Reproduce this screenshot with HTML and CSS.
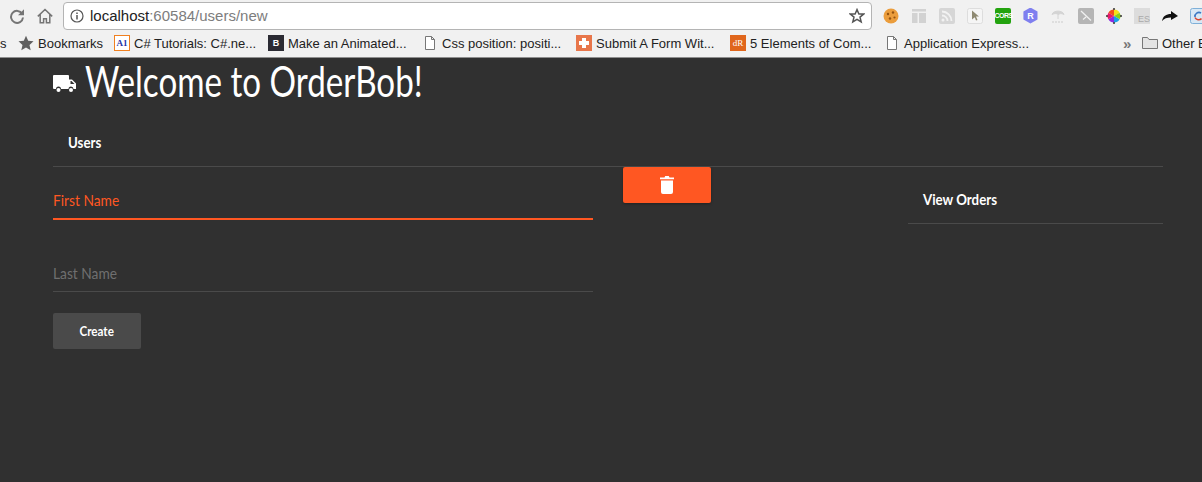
FILE: index.html
```html
<!DOCTYPE html>
<html lang="en">
<head>
<meta charset="utf-8">
<title>OrderBob</title>
<link rel="stylesheet" href="styles.css">
</head>
<body>
<header class="chrome">
  <div class="toolbar">
    <svg class="nav reload" viewBox="0 0 16 16"><path d="M13.200 5.800A6 6 0 1 0 14 9.500" fill="none" stroke="#757575" stroke-width="2"/><path d="M15 1.200v6H9z" fill="#757575"/></svg>
    <svg class="nav home" viewBox="0 0 16 16"><path d="M.8 8.400 8 1.500l7.200 6.900M3.200 6.400V14.800h3.400v-4h2.800v4h3.400V6.400" fill="none" stroke="#757575" stroke-width="1.500"/></svg>
    <div class="omnibox">
      <svg class="info" viewBox="0 0 14 14"><circle cx="7" cy="7" r="6" fill="none" stroke="#555" stroke-width="1.200"/><path d="M7 6v4.500M7 3.400v1.500" stroke="#555" stroke-width="1.500"/></svg>
      <span class="url">localhost<span class="url-dim">:60584/users/new</span></span>
      <svg class="star" viewBox="0 0 16 16"><path d="M8 1.600 9.900 6h4.800l-3.700 3.100 1.200 4.900L8 11.400 3.800 14 5 9.100 1.300 6h4.800z" fill="none" stroke="#555" stroke-width="1.500"/></svg>
    </div>
    <div class="extensions">
      <svg class="ext" viewBox="0 0 16 16"><circle cx="8" cy="8" r="7.500" fill="#eb9d3c"/><g fill="#95520f"><circle cx="5" cy="6" r="1.200"/><circle cx="10" cy="4.500" r="1.200"/><circle cx="7" cy="10.500" r="1.200"/><circle cx="11.500" cy="9.500" r="1.100"/></g></svg>
      <svg class="ext" viewBox="0 0 16 16"><path d="M1 1h14v2.500H1zM1 5h5.500v10H1zM8 5h7v10H8z" fill="#d2d2d2"/></svg>
      <svg class="ext" viewBox="0 0 16 16"><rect width="16" height="16" rx="2" fill="#d6d6d6"/><g fill="none" stroke="#f2f2f2" stroke-width="1.800"><path d="M3 7.500a5.500 5.500 0 0 1 5.500 5.500M3 3.500A9.500 9.500 0 0 1 12.500 13"/></g><circle cx="4" cy="12" r="1.500" fill="#f2f2f2"/></svg>
      <svg class="ext" viewBox="0 0 16 16"><rect x=".5" y=".5" width="15" height="15" rx="2" fill="#f5f5f5" stroke="#ddd"/><path d="M5 2.500 12 8.500H9l1.500 3.500-1.500.6L7.800 9.200 5 11.500z" fill="#8f8a72"/></svg>
      <span class="ext cors">CORS</span>
      <span class="ext rbadge">R</span>
      <svg class="ext" viewBox="0 0 16 16"><path d="M2 6.500C3 2 13 2 14 6.500 11 5 10 5.500 8.500 6.500 7 5.500 5 5 2 6.500ZM8 6v5" fill="#d4d4d4" stroke="#d4d4d4"/><path d="M2 14h12" stroke="#dedede" stroke-width="2" stroke-dasharray="2 1"/></svg>
      <svg class="ext" viewBox="0 0 16 16"><rect width="16" height="16" rx="2" fill="#b5b5b5"/><path d="M3 3 13 12.500M5 11.500 8 9" stroke="#f0f0f0" stroke-width="1.300"/></svg>
      <svg class="ext" viewBox="0 0 16 16"><path d="M8 8V1.500a6.500 6.500 0 0 1 5.600 3.200z" fill="#f7e017"/><path d="M8 8l5.600-3.300a6.500 6.500 0 0 1 0 6.600z" fill="#8bd117"/><path d="M8 8l5.600 3.300A6.500 6.500 0 0 1 8 14.500z" fill="#18a0e8"/><path d="M8 8v6.500a6.500 6.500 0 0 1-5.600-3.200z" fill="#8a2be2"/><path d="M8 8 2.400 11.300a6.500 6.500 0 0 1 0-6.600z" fill="#e8186a"/><path d="M8 8 2.400 4.700A6.500 6.500 0 0 1 8 1.500z" fill="#f2501a"/><path d="M8 0v2M8 14v2M0 8h2M14 8h2" stroke="#333" stroke-width="1.500"/></svg>
      <div class="ext es">ES</div>
      <svg class="ext" viewBox="0 0 16 16"><path d="M0 13C1 8 4 6 9 6V3l7 5-7 4V9.500C5 9.500 2 10.500 0 13Z" fill="#111"/></svg>
      <svg class="ext" viewBox="0 0 16 16"><rect x=".5" y=".5" width="15" height="15" rx="2" fill="#d8e8f5" stroke="#7fb0d8"/><path d="M11 5a4 4 0 0 0-6 4" fill="none" stroke="#3b78c4" stroke-width="1.600"/><path d="M5 9.500a4 4 0 0 0 6.500 1" fill="none" stroke="#d9432f" stroke-width="1.600"/></svg>
    </div>
  </div>
  <nav class="bookmarks">
    <span class="bm bm-cut">s</span>
    <span class="bm bm-first"><svg class="fav" viewBox="0 0 16 16"><path d="M8 .8 10.200 5.800l5.300.5-4 3.600 1.200 5.300L8 12.400l-4.700 2.800 1.200-5.300-4-3.600 5.300-.5z" fill="#5f5f5f"/></svg>Bookmarks</span>
    <span class="bm"><span class="fav fav-a">A1</span>C# Tutorials: C#.ne...</span>
    <span class="bm"><span class="fav fav-b">B</span>Make an Animated...</span>
    <span class="bm"><svg class="fav" viewBox="0 0 16 16"><path d="M3.500 1.500h6l3 3v10h-9zM9.500 1.500v3h3" fill="#fff" stroke="#777"/></svg>Css position: positi...</span>
    <span class="bm"><svg class="fav" viewBox="0 0 16 16"><rect width="16" height="16" fill="#e8764a"/><path d="M6 3h4v3h3v4h-3v3H6v-3H3V6h3z" fill="#fff"/></svg>Submit A Form Wit...</span>
    <span class="bm"><span class="fav fav-d">dR</span>5 Elements of Com...</span>
    <span class="bm bm-app"><svg class="fav" viewBox="0 0 16 16"><path d="M3.500 1.500h6l3 3v10h-9zM9.500 1.500v3h3" fill="#fff" stroke="#777"/></svg>Application Express...</span>
    <span class="bm-more">»</span>
    <span class="bm bm-other"><svg class="fav" viewBox="0 0 16 16"><path d="M.5 13.500v-11h5l1.500 2h8.500v9z" fill="#e4e4e4" stroke="#777"/></svg>Other B</span>
  </nav>
</header>
<main class="app">
  <h1 class="title">
    <svg class="truck" viewBox="0 0 23 18"><path d="M1 0h14a1 1 0 0 1 1 1v3.500h3l4 4V14H20.500a2.500 2.500 0 0 0-5 0H8a2.500 2.500 0 0 0-5 0H1a1 1 0 0 1-1-1V1a1 1 0 0 1 1-1Z" fill="#fff"/><path d="M17.500 6v3h4l-3-3z" fill="#303030"/><circle cx="5.500" cy="15" r="2" fill="#fff"/><circle cx="18" cy="15" r="2" fill="#fff"/></svg>
    <span class="squeeze title-text">Welcome to OrderBob!</span>
  </h1>
  <div class="nav-item users"><span class="squeeze nav-text">Users</span></div>
  <div class="content">
    <form class="form">
      <div class="field field-active"><span class="squeeze field-text">First Name</span></div>
      <div class="field field-idle"><span class="squeeze field-text">Last Name</span></div>
      <button class="create" type="button"><span class="create-text">Create</span></button>
    </form>
    <button class="delete" type="button" aria-label="Delete">
      <svg class="trash" viewBox="0 0 14 18"><path d="M0 1.500h14V3.200H0zM4.500 1.500 5.200 0h3.600l.7 1.500zM1 4.500h12V16a2 2 0 0 1-2 2H3a2 2 0 0 1-2-2z" fill="#fff"/></svg>
    </button>
    <div class="nav-item orders"><span class="squeeze nav-text">View Orders</span></div>
  </div>
</main>
</body>
</html>
```
FILE: styles.css
```css
* { box-sizing: border-box; }
html, body { margin: 0; height: 100%; }
body { background: #303030; display: flex; flex-direction: column; overflow: hidden; }

.chrome { background: #f1f1f1; height: 58px; border-bottom: 1px solid #8e8e8e; font-family: "Liberation Sans", Arial, sans-serif; flex: none; overflow: hidden; }
.toolbar { height: 31px; display: flex; align-items: center; padding-left: 9px; }
.nav { width: 16px; height: 16px; flex: none; }
.home { margin-left: 12px; }
.omnibox { margin-left: 10px; width: 809px; height: 28px; background: #fff; border: 1px solid #b4b4b4; border-radius: 4px; display: flex; align-items: center; padding: 0 6px; flex: none; }
.info { width: 14px; height: 14px; margin-right: 6px; }
.url { font-size: 15px; color: #222; flex: 1; }
.url-dim { color: #7d7d7d; }
.star { width: 16px; height: 16px; }
.extensions { display: flex; align-items: center; gap: 11.900px; margin-left: 11px; }
.ext { width: 16px; height: 16px; flex: none; display: block; }
.es { background: #dcdcdc; color: #aaa; font-size: 9px; text-align: right; padding-top: 6px; line-height: 10px; }
.cors { background: #23a30f; color: #fff; border-radius: 2px; font-size: 7px; font-weight: 700; line-height: 16px; text-align: center; letter-spacing: -.5px; white-space: nowrap; }
.rbadge { background: #7f7fef; color: #fff; clip-path: polygon(50% 0, 94% 25%, 94% 75%, 50% 100%, 6% 75%, 6% 25%); font-size: 9px; font-weight: 700; line-height: 16px; text-align: center; }

.bookmarks { height: 26px; display: flex; align-items: center; font-size: 13px; color: #222; white-space: nowrap; padding-bottom: 2px; }
.bm { display: flex; align-items: center; width: 154px; flex: none; }
.bm-cut { width: 18px; }
.bm-first { width: 96px; }
.bm-app { width: 239px; }
.fav { width: 16px; height: 16px; margin-right: 4px; flex: none; display: block; font-size: 9px; line-height: 16px; text-align: center; font-weight: 700; }
.fav-a { background: #fff; border: 1px solid #f08020; color: #2233aa; line-height: 14px; font-family: "Liberation Serif", serif; }
.fav-b { background: #2b2b33; color: #fff; }
.fav-d { background: #e0661c; color: #fff; font-family: "Liberation Serif", serif; font-weight: 400; }
.bm-more { color: #777; width: 19px; font-size: 15px; font-weight: 700; flex: none; }
.bm-other { width: auto; }

.app { flex: 1; padding: 0 39px 0 53px; color: #fff; font-family: Lato, sans-serif; }
.squeeze { display: inline-block; transform-origin: left center; white-space: nowrap; }
.title { margin: 0; height: 48px; display: flex; align-items: center; font-size: 42px; font-weight: 400; gap: 9px; }
.title-text { transform: scaleX(.79); margin-top: -3px; }
.truck { width: 23px; height: 18px; margin-top: 4px; flex: none; }
.nav-item { font-size: 16px; font-weight: 700; display: flex; align-items: center; padding-left: 15px; border-bottom: 1px solid #4a4a4a; }
.nav-text { transform: scaleX(.83); }
.users { height: 61px; padding-top: 10px; }
.content { display: flex; align-items: flex-start; }
.form { width: 540px; flex: none; display: flex; flex-direction: column; }
.field { font-size: 16px; display: flex; align-items: center; padding-top: 13px; }
.field-text { transform: scaleX(.86); }
.field-active { color: #ff5722; border-bottom: 2px solid #ff5722; height: 53px; }
.field-idle { color: #6f6f6f; border-bottom: 1px solid #4a4a4a; margin-top: 20px; height: 52px; }
.create { margin-top: 21px; width: 88px; height: 36px; border: 0; border-radius: 2px; background: #4a4a4a; color: #fff; font-family: inherit; font-size: 14px; font-weight: 700; padding: 0 0 2px; }
.create-text { display: inline-block; transform: scaleX(.83); }
.delete { margin-left: 30px; width: 88px; height: 36px; border: 0; border-radius: 2px; background: #ff5722; box-shadow: 0 1px 3px rgba(0,0,0,.3); display: flex; align-items: center; justify-content: center; flex: none; padding: 0; }
.trash { width: 14px; height: 18px; }
.orders { margin-left: 197px; flex: 1; height: 57px; padding-top: 6px; }
```
